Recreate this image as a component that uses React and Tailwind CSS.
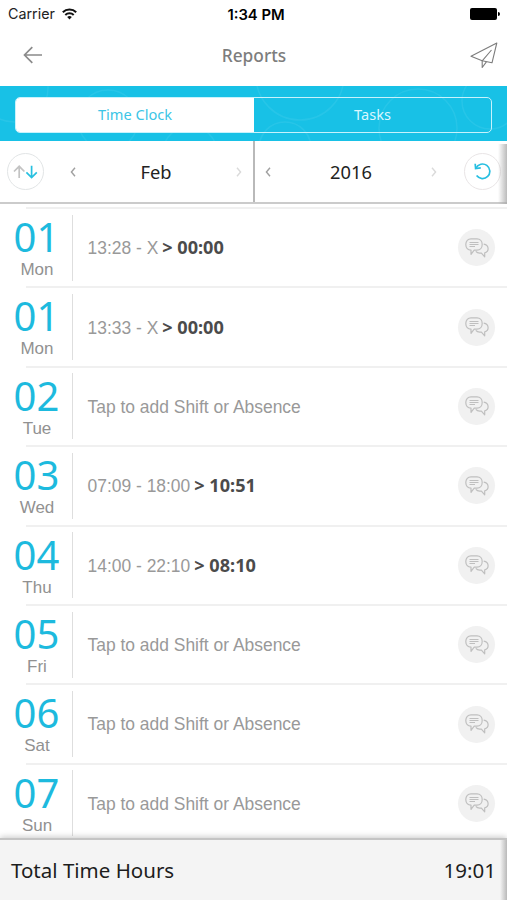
import React from "react";

const NOTO = "font-['Noto_Sans','Open_Sans',sans-serif]";
const HELV = "font-['Liberation_Sans',Arial,sans-serif]";

const days = [
  { num: "01", day: "Mon", span: "13:28 - X", total: "00:00" },
  { num: "01", day: "Mon", span: "13:33 - X", total: "00:00" },
  { num: "02", day: "Tue" },
  { num: "03", day: "Wed", span: "07:09 - 18:00", total: "10:51" },
  { num: "04", day: "Thu", span: "14:00 - 22:10", total: "08:10" },
  { num: "05", day: "Fri" },
  { num: "06", day: "Sat" },
  { num: "07", day: "Sun" },
];

function StatusBar() {
  return (
    <div className="grid h-[27px] shrink-0 grid-cols-3 items-center pl-[8px] pr-[7px] text-[14px] text-[#222]">
      <div className="flex items-center gap-[7px]">
        <span className="font-['Inter',sans-serif] text-[14.3px]">Carrier</span>
        <svg width="15" height="12" viewBox="0 0 15 12" fill="none" stroke="#111" strokeWidth="2">
          <path d="M0.8 4.3a9.6 9.6 0 0 1 13.4 0" />
          <path d="M3.3 7a6 6 0 0 1 8.4 0" />
          <path d="M5.2 9a3.3 3.3 0 0 1 4.6 0L7.5 11.4z" fill="#111" stroke="none" />
        </svg>
      </div>
      <span className="pl-[4px] pt-[2px] text-center font-['Inter',sans-serif] text-[14.8px] font-semibold leading-[20px] text-black">1:34 PM</span>
      <div className="flex items-center justify-end">
        <span className="h-[12px] w-[27px] rounded-[2px] bg-black" />
        <span className="ml-[1px] h-[4px] w-[2px] rounded-r-full bg-black" />
      </div>
    </div>
  );
}

function Header() {
  return (
    <div className="grid h-[59px] shrink-0 grid-cols-3 items-center pb-[3px] pl-[23px] pr-[9px]">
      <svg width="20" height="18" viewBox="0 0 20 18" fill="none" stroke="#8b8b8b" strokeWidth="1.7">
        <path d="M19 9H1.5M9.3 1.2L1.5 9l7.8 7.8" />
      </svg>
      <h1 className={`${NOTO} -ml-[13px] pt-[2px] text-center text-[17.3px] font-medium text-[#7d7d7d]`}>Reports</h1>
      <svg className="justify-self-end" width="28" height="27" viewBox="0 0 28 27" fill="none" stroke="#7c7c7c" strokeWidth="1.1" strokeLinejoin="round">
        <path d="M26.8 1L1 14.3l11.2 4.5 9.8 2z" />
        <path d="M21.5 8L12.2 18.8v6.7l4.2-5.6" />
      </svg>
    </div>
  );
}

function Tabs() {
  return (
    <div className="relative h-[55px] shrink-0 bg-[#18c1e6] px-[15px] pt-[11px]">
      <svg className="absolute left-0 top-0" width="507" height="55" fill="none" stroke="#4fd0ee" strokeOpacity=".28" strokeWidth="1.5">
        <circle cx="108" cy="34" r="30" />
        <circle cx="14" cy="2" r="34" />
        <circle cx="190" cy="67" r="27" />
        <circle cx="300" cy="-10" r="44" />
        <circle cx="418" cy="42" r="39" />
        <circle cx="285" cy="62" r="26" />
        <circle cx="490" cy="15" r="28" />
      </svg>
      <div className={`${NOTO} relative flex h-[36px] overflow-hidden rounded-[5px] border-[1.5px] border-[#c7f2fc] text-[14.6px]`}>
        <div className="flex w-[238px] items-center justify-center bg-white text-[#3cc5e6]">Time Clock</div>
        <div className="flex flex-1 items-center justify-center text-[#d8f7ff]">Tasks</div>
      </div>
    </div>
  );
}

function Chevron({ right, color }) {
  return (
    <svg width="6" height="10" viewBox="0 0 6 10" fill="none" stroke={color} strokeWidth="1.4">
      <path d={right ? "M1 .7L4.6 5 1 9.3" : "M5 .7L1.4 5 5 9.3"} />
    </svg>
  );
}

function Filters() {
  return (
    <div className={`${NOTO} relative flex h-[63px] shrink-0 border-b-2 border-[#cbcbcb] text-[18.3px] text-[#222]`}>
      <div className="flex w-[255px] items-center border-r-2 border-[#b9b9b9] pl-[7px] pr-[11px]">
        <div className="flex size-[37px] items-center justify-center rounded-full border-[1.5px] border-[#e2e5e6]">
          <svg width="25" height="14" viewBox="0 0 25 14" fill="none" strokeWidth="1.7">
            <path d="M6.2 13V1.5M1 6.5l5.2-5.2 5.2 5.2" stroke="#c3c3c3" />
            <path d="M18.6 0.7v11.8M13.4 7.3l5.2 5.2 5.2-5.2" stroke="#27c0e0" />
          </svg>
        </div>
        <span className="ml-[26px]"><Chevron color="#a0a0a0" /></span>
        <span className="flex-1 text-center">Feb</span>
        <Chevron right color="#dadada" />
      </div>
      <div className="flex flex-1 items-center pl-[10px] pr-[6px]">
        <Chevron color="#a0a0a0" />
        <span className="flex-1 text-center">2016</span>
        <Chevron right color="#dadada" />
        <div className="ml-[27px] flex size-[37px] items-center justify-center rounded-full border-[1.5px] border-[#e9e5e6] bg-white">
          <svg width="18" height="18" viewBox="0 0 18 18" fill="none" stroke="#27bfe1" strokeWidth="1.7">
            <path d="M2 5A7.3 7.3 0 1 1 2.6 12.6" />
            <path d="M1.2 0.8L1.6 5.5 6.8 4.8" />
          </svg>
        </div>
      </div>
      <div className="absolute right-0 top-[3px] h-[60px] w-[9px] bg-gradient-to-r from-transparent to-[#aaa]/80" />
    </div>
  );
}

function ChatButton() {
  return (
    <div className="mr-[12px] flex size-[37px] items-center justify-center rounded-full bg-[#f1f1f1]">
      <svg width="24" height="20" viewBox="0 0 24 20" fill="none" stroke="#bfbfbf" strokeWidth="1.2" strokeLinejoin="round">
        <path d="M6 0.8h6c3 0 5.2 2.4 5.2 5.7s-2.200 5.700-5.200 5.700H9.200L6 16.300V12.200C2.800 12.200 0.800 9.800 0.800 6.500S3 0.800 6 0.800z" />
        <path d="M18.700 6.200c2.600 0.400 4.400 2.200 4.400 4.500 0 2-1.400 3.700-3.400 4.200v3.900l-3.300-3.700h-1.700c-1.700 0-3.100-0.700-3.900-1.700" />
        <path d="M4.500 4.500h9M4.500 6.500h9M4.500 8.500h5.500" strokeWidth="1" />
      </svg>
    </div>
  );
}

function DayRow({ item }) {
  return (
    <div className="flex h-[79.4px] shrink-0 flex-col">
      <div className="ml-[26px] h-[2px] shrink-0 bg-[#f0f0f0]" />
      <div className="flex flex-1 items-center">
        <div className="flex h-full w-[73px] flex-col items-center pt-[7px]">
          <span className={`${NOTO} h-[41px] text-[40px] font-normal leading-[41px] text-[#1dbade]`}>{item.num}</span>
          <span className={`${HELV} mt-[3px] pl-[1px] text-[17px] leading-[20px] text-[#919191]`}>{item.day}</span>
        </div>
        <div className="-ml-[1px] h-[66px] w-px bg-[#dedede]" />
        <div className={`${HELV} flex-1 pl-[14.5px] pt-[1px] text-[17.45px] text-[#999]`}>
          {item.span ? (
            <span className="flex items-baseline gap-[4px]">
              <span>{item.span}</span>
              <b className={`${NOTO} text-[18.1px] font-bold leading-[24px] text-[#4b4b4b]`}>&gt; {item.total}</b>
            </span>
          ) : (
            "Tap to add Shift or Absence"
          )}
        </div>
        <ChatButton />
      </div>
    </div>
  );
}

export default function App() {
  return (
    <div className="flex h-[900px] w-[507px] flex-col overflow-hidden bg-white">
      <StatusBar />
      <Header />
      <Tabs />
      <Filters />
      <div className="min-h-0 flex-1 overflow-hidden pt-[3px]">
        {days.map((item, i) => (
          <DayRow key={i} item={item} />
        ))}
      </div>
      <div className={`${NOTO} relative flex h-[62px] shrink-0 items-center justify-between border-t-2 border-[#c4c4c4] bg-[#f4f4f4] pl-[11px] pr-[11px] pt-[1px] text-[20.5px] text-[#1d1d1d] shadow-[0_-1px_6px_rgba(0,0,0,0.22)]`}>
        <span>Total Time Hours</span>
        <span>19:01</span>
        <div className="absolute right-0 top-0 h-[60px] w-[7px] bg-gradient-to-r from-transparent to-[#aaa]/80" />
      </div>
    </div>
  );
}
